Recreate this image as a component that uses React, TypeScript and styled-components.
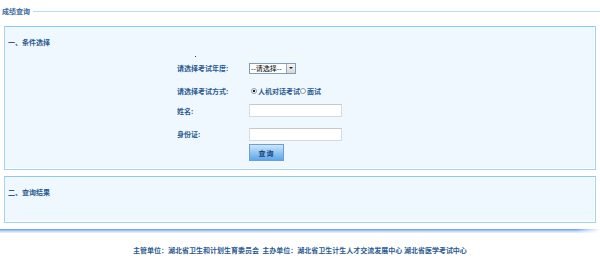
import styled, { createGlobalStyle } from 'styled-components';

const GlobalStyle = createGlobalStyle`
  html, body {
    margin: 0;
    padding: 0;
    background: #ffffff;
  }
  body {
    font-family: "Noto Sans CJK SC", "Noto Sans", sans-serif;
    font-size: 7px;
    font-weight: 600;
    color: #2a5a92;
  }
`;

const Page = styled.div`
  width: 600px;
  height: 260px;
  overflow: hidden;
`;

const Legend = styled.div`
  display: flex;
  align-items: center;
  height: 12px;
  margin-top: 5px;
  padding-left: 2px;
`;

const LegendText = styled.span`
  color: #36689e;
  line-height: 12px;
  padding-right: 3px;
`;

const LegendLine = styled.div`
  flex: 1;
  border-top: 1px solid #b9dcf4;
`;

const Panel = styled.div<{ $height: number; $top: number }>`
  margin: ${({ $top }) => $top}px 4px 0 4px;
  height: ${({ $height }) => $height}px;
  box-sizing: border-box;
  border: 1px solid #a4d2f4;
  border-top-color: #8ccaf2;
  background: #f0f8ff;
  box-shadow: inset 0 -1px 0 #ffffff, inset -1px 0 0 #ffffff;
  position: relative;
`;

const PanelTitle = styled.div`
  padding: 10px 0 0 3px;
  line-height: 10px;
`;

const Dot = styled.span`
  position: absolute;
  left: 190px;
  top: 29px;
  width: 1px;
  height: 1px;
  background: #1a2aa0;
`;

const Form = styled.div`
  display: flex;
  flex-direction: column;
  margin-left: 172px;
`;

const Row = styled.div<{ $top: number; $height: number }>`
  display: flex;
  align-items: center;
  margin-top: ${({ $top }) => $top}px;
  height: ${({ $height }) => $height}px;
`;

const Label = styled.span`
  width: 72px;
`;

const SelectBox = styled.div`
  display: flex;
  align-items: stretch;
  height: 11px;
  width: 47px;
  box-sizing: border-box;
  border: 1px solid #7f9db9;
  background: #fff;
  color: #000;
  font-weight: 400;
`;

const SelectText = styled.span`
  flex: 1;
  line-height: 9px;
  padding-left: 1px;
  font-size: 7px;
`;

const SelectArrow = styled.span`
  width: 8px;
  border-left: 1px solid #9aa8b8;
  background: linear-gradient(#f4f4f4, #d8d8d8);
  display: flex;
  align-items: center;
  justify-content: center;
  &::after {
    content: '';
    border-left: 2px solid transparent;
    border-right: 2px solid transparent;
    border-top: 2px solid #222;
  }
`;

const RadioGroup = styled.div`
  display: flex;
  align-items: center;
  margin-left: 2px;
`;

const Radio = styled.span<{ $checked?: boolean }>`
  width: 6px;
  height: 6px;
  box-sizing: border-box;
  border-radius: 50%;
  border: 1px solid #8a9aaa;
  background: ${({ $checked }) =>
    $checked ? 'radial-gradient(circle, #222 0 1.3px, #fff 1.6px)' : '#fff'};
  margin-right: 1px;
`;

const TextInput = styled.input`
  width: 93px;
  height: 13px;
  box-sizing: border-box;
  margin: 0;
  padding: 0;
  border: 1px solid #dadada;
  border-top-color: #c8c8c8;
  background: #fff;
  outline: none;
`;

const Button = styled.button`
  width: 35px;
  height: 17px;
  margin: 0;
  padding: 0;
  box-sizing: border-box;
  border: 1px solid #6d9fd4;
  background: linear-gradient(#cde6fb, #93c6f2 50%, #5da6ea);
  color: #1a3f78;
  font-family: "Noto Sans CJK SC", sans-serif;
  font-size: 7px;
  font-weight: 600;
  letter-spacing: 1px;
`;

const ShadowBar = styled.div`
  margin-top: 6px;
  height: 4px;
  background: linear-gradient(#5a98e6, #b6d2f4 50%, #eef4fc);
  -webkit-mask-image: linear-gradient(90deg, #000 96%, transparent);
`;

const Footer = styled.div`
  margin-top: 12px;
  text-align: center;
  line-height: 10px;
`;

export default function App() {
  return (
    <Page>
      <GlobalStyle />
      <Legend>
        <LegendText>成绩查询</LegendText>
        <LegendLine />
      </Legend>
      <Panel $top={9} $height={144}>
        <PanelTitle>一、条件选择</PanelTitle>
        <Dot />
        <Form>
          <Row $top={15} $height={12}>
            <Label>请选择考试年度:</Label>
            <SelectBox>
              <SelectText>--请选择--</SelectText>
              <SelectArrow />
            </SelectBox>
          </Row>
          <Row $top={11} $height={12}>
            <Label>请选择考试方式:</Label>
            <RadioGroup>
              <Radio $checked />
              人机对话考试
              <Radio />
              面试
            </RadioGroup>
          </Row>
          <Row $top={7} $height={13}>
            <Label>姓名:</Label>
            <TextInput />
          </Row>
          <Row $top={10} $height={14}>
            <Label>身份证:</Label>
            <TextInput />
          </Row>
          <Row $top={3} $height={17}>
            <Label />
            <Button>查询</Button>
          </Row>
        </Form>
      </Panel>
      <Panel $top={6} $height={47}>
        <PanelTitle>二、查询结果</PanelTitle>
      </Panel>
      <ShadowBar />
      <Footer>
        主管单位：湖北省卫生和计划生育委员会 &nbsp;主办单位：湖北省卫生计生人才交流发展中心 湖北省医学考试中心
      </Footer>
    </Page>
  );
}
